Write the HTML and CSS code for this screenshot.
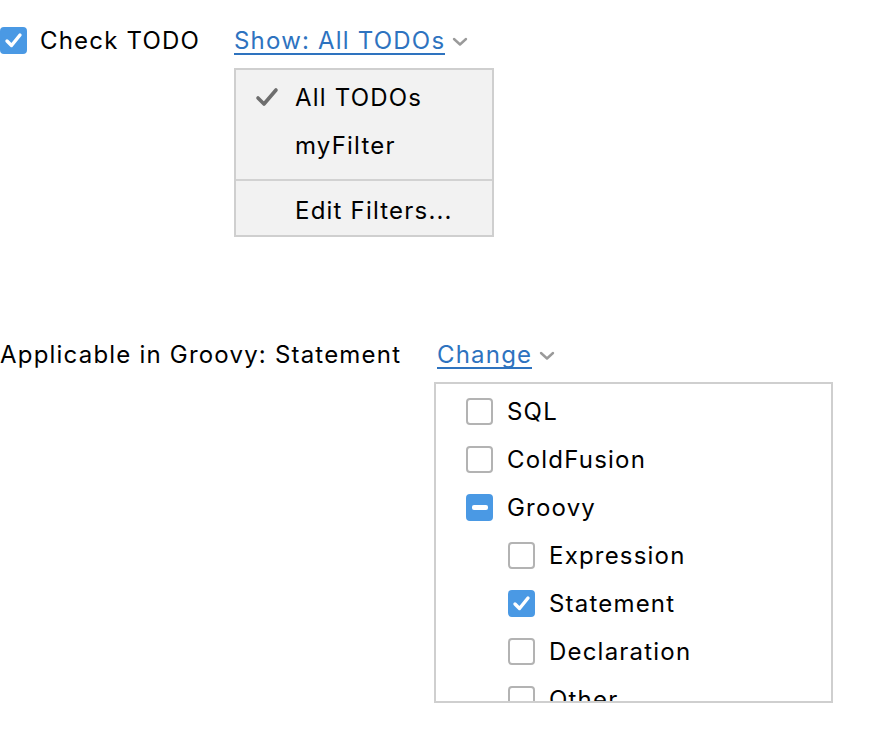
FILE: index.html
```html
<!DOCTYPE html>
<html>
<head>
<meta charset="utf-8">
<link rel="stylesheet" href="styles.css">
</head>
<body>
<div class="page">
  <section class="block block-todo">
    <div class="cb cb-on">
      <svg viewBox="0 0 27 27" width="27" height="27"><path d="M7 14 L11.5 18.5 L20 8" fill="none" stroke="#fff" stroke-width="3.4" stroke-linecap="round" stroke-linejoin="round"/></svg>
    </div>
    <span class="label label-todo">Check TODO</span>
    <div class="drop">
      <div class="link-row">
        <span class="link">Show: All TODOs</span>
        <svg class="chev" viewBox="0 0 16 10" width="16" height="10"><path d="M2 2 L8 7.5 L14 2" fill="none" stroke="#9a9a9a" stroke-width="2.4" stroke-linecap="round" stroke-linejoin="round"/></svg>
      </div>
      <div class="menu">
        <div class="menu-group">
          <div class="menu-item">
            <svg class="mark" viewBox="0 0 24 24" width="24" height="24"><path d="M3 13 L9 19 L21 5" fill="none" stroke="#6e6e6e" stroke-width="3.6" stroke-linecap="round" stroke-linejoin="round"/></svg>
            <span>All TODOs</span>
          </div>
          <div class="menu-item"><span>myFilter</span></div>
        </div>
        <div class="menu-sep"></div>
        <div class="menu-group menu-group-last">
          <div class="menu-item"><span>Edit Filters...</span></div>
        </div>
      </div>
    </div>
  </section>

  <section class="block block-groovy">
    <span class="label label-groovy">Applicable in Groovy: Statement</span>
    <div class="drop">
      <div class="link-row link-row-change">
        <span class="link">Change</span>
        <svg class="chev" viewBox="0 0 16 10" width="16" height="10"><path d="M2 2 L8 7.5 L14 2" fill="none" stroke="#9a9a9a" stroke-width="2.4" stroke-linecap="round" stroke-linejoin="round"/></svg>
      </div>
      <div class="tree">
        <div class="tree-item"><div class="cb"></div><span>SQL</span></div>
        <div class="tree-item"><div class="cb"></div><span>ColdFusion</span></div>
        <div class="tree-item"><div class="cb cb-on"><span class="dash"></span></div><span>Groovy</span></div>
        <div class="tree-item sub"><div class="cb"></div><span>Expression</span></div>
        <div class="tree-item sub"><div class="cb cb-on"><svg viewBox="0 0 27 27" width="27" height="27"><path d="M7 14 L11.5 18.5 L20 8" fill="none" stroke="#fff" stroke-width="3.4" stroke-linecap="round" stroke-linejoin="round"/></svg></div><span>Statement</span></div>
        <div class="tree-item sub"><div class="cb"></div><span>Declaration</span></div>
        <div class="tree-item sub"><div class="cb"></div><span>Other</span></div>
      </div>
    </div>
  </section>
</div>
</body>
</html>
```

FILE: styles.css
```css
html, body {
  margin: 0;
  padding: 0;
  background: #ffffff;
}
body {
  font-family: Inter, "Liberation Sans", Arial, sans-serif;
  font-size: 24px;
  letter-spacing: 1.2px;
  color: #000000;
  width: 890px;
  height: 736px;
  overflow: hidden;
}
.page {
  display: flex;
  flex-direction: column;
}
.block {
  display: flex;
  align-items: flex-start;
}
.block-todo {
  margin-top: 27px;
}
.block-groovy {
  margin-top: 104px;
}
.label {
  height: 28px;
  line-height: 28px;
  white-space: nowrap;
}
.label-todo {
  margin-left: 13px;
  width: 194px;
}
.label-groovy {
  width: 434px;
}
.cb {
  box-sizing: border-box;
  width: 27px;
  height: 27px;
  flex: 0 0 27px;
  border: 2px solid #b3b3b3;
  border-radius: 4px;
  background: #fff;
  display: flex;
  align-items: center;
  justify-content: center;
  position: relative;
}
.cb-on {
  background: #4a99e4;
  border-color: #4a99e4;
}
.cb-on svg {
  position: absolute;
  left: -2px;
  top: -2px;
}
.dash {
  width: 16px;
  height: 5px;
  border-radius: 2px;
  background: #fff;
}
.drop {
  display: flex;
  flex-direction: column;
}
.link-row {
  display: flex;
  align-items: center;
  height: 28px;
  gap: 7px;
}
.link-row-change {
  padding-left: 3px;
}
.link {
  color: #2e73bf;
  line-height: 28px;
  border-bottom: 2px solid #2e73bf;
  height: 26px;
  white-space: nowrap;
}
.chev {
  margin-top: 2px;
}
.menu {
  margin-top: 13px;
  width: 260px;
  box-sizing: border-box;
  border: 2px solid #cfcfcf;
  background: #f2f2f2;
}
.menu-group {
  padding: 3px 0 10px;
}
.menu-group-last {
  padding: 5px 0 1px;
}
.menu-item {
  height: 48px;
  display: flex;
  align-items: center;
  padding-left: 59px;
  position: relative;
  white-space: nowrap;
}
.mark {
  position: absolute;
  left: 19px;
  top: 12px;
}
.menu-sep {
  height: 2px;
  background: #d2d2d2;
}
.tree {
  margin-top: 13px;
  width: 399px;
  height: 321px;
  box-sizing: border-box;
  border: 2px solid #cfcfcf;
  background: #fff;
  overflow: hidden;
  padding: 3px 0 0 30px;
}
.tree-item {
  height: 48px;
  display: flex;
  align-items: center;
  gap: 14px;
  white-space: nowrap;
}
.tree-item.sub {
  padding-left: 42px;
}
```
